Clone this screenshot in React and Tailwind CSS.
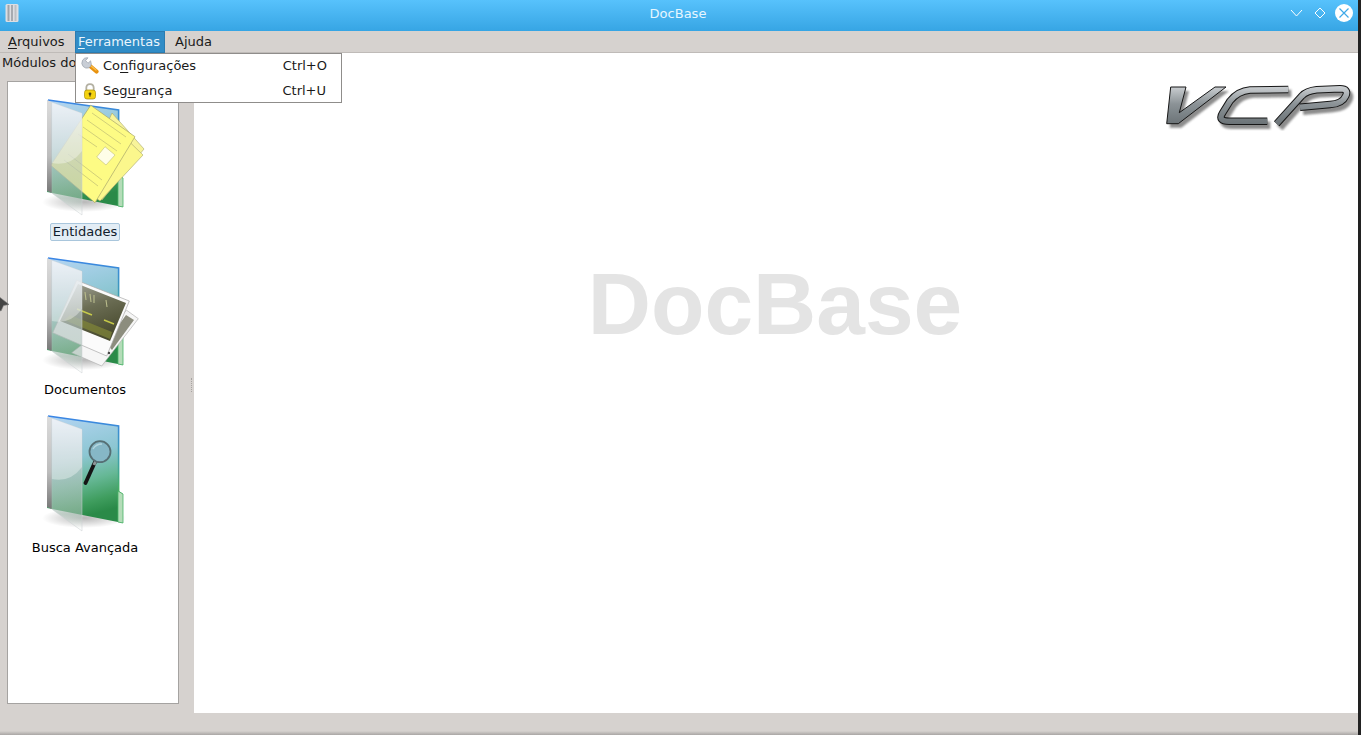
import React from "react";

const modules = [
  { label: "Entidades", kind: "papers", selected: true },
  { label: "Documentos", kind: "photos" },
  { label: "Busca Avançada", kind: "search" },
];

function Papers() {
  return (
    <g>
      <polygon points="72,18 104,54 62,105 40,88" fill="#f8f49a" stroke="#a8a66c" strokeWidth="0.6" />
      <polygon points="68,26 103,60 60,106 30,84" fill="#fbf78c" stroke="#a8a66c" strokeWidth="0.6" />
      <polygon points="50.7,10.3 95,41.7 55,107.7 10.7,70.3" fill="#fdfb84" stroke="#a8a66c" strokeWidth="0.7" />
      <g stroke="#b4b270" strokeWidth="0.6">
        <line x1="52" y1="18" x2="86" y2="42" />
        <line x1="47" y1="25" x2="81" y2="49" />
        <line x1="43" y1="32" x2="77" y2="56" />
        <line x1="38" y1="39" x2="57" y2="52" />
        <line x1="28" y1="59" x2="62" y2="85" />
        <line x1="24" y1="65" x2="58" y2="91" />
      </g>
      <polygon points="65,51.7 75,60 66,70 56.7,62" fill="#fefee8" stroke="#b4b270" strokeWidth="0.5" />
    </g>
  );
}

function Photos() {
  return (
    <g>
      <polygon points="86.7,57.3 98.3,65.7 61.7,113 31.7,99.7" fill="#f6f6f6" stroke="#a9a9a9" strokeWidth="0.6" />
      <polygon points="86,62 94,67 72,97 66,90" fill="#8c8d7e" />
      <polygon points="36.7,27.3 89.3,48 66.7,103 12.7,79.7" fill="#fbfbfb" stroke="#a9a9a9" strokeWidth="0.7" />
      <polygon points="38,31 86,50 70,88 20,68" fill="url(#photo-img)" />
      <polygon points="30,62 72,79 70,86 24,67" fill="#7f8438" opacity="0.75" />
      <path d="M37 56 L52 62 M64 67 L74 71" stroke="#d8dc4a" strokeWidth="1.4" opacity="0.85" />
      <path d="M45 39 L46 47 M50 41 L51 49 M54 42 L54 50 M66 47 L67 54" stroke="#b9bc8c" strokeWidth="1.1" />
      <circle cx="69" cy="100" r="1.2" fill="#444" />
    </g>
  );
}

function Lens() {
  return (
    <g>
      <line x1="55" y1="51" x2="45.5" y2="72" stroke="#151515" strokeWidth="3.8" strokeLinecap="round" />
      <line x1="56" y1="49" x2="54" y2="54" stroke="#8d9798" strokeWidth="3" />
      <circle cx="60" cy="40.7" r="10.5" fill="#86b7c6" stroke="#566f74" strokeWidth="1.8" />
      <path d="M53 38 Q56 33 62 33" stroke="#b4d6df" strokeWidth="1.4" fill="none" />
    </g>
  );
}

function FolderIcon({ kind }) {
  const p = "f-" + kind;
  return (
    <svg width="110" height="128" viewBox="0 0 110 128" className="block shrink-0">
      <defs>
        <linearGradient id={p + "-back"} x1="0" y1="0" x2="0.2" y2="1">
          <stop offset="0" stopColor="#b5d5f4" />
          <stop offset="0.45" stopColor="#8cc6d2" />
          <stop offset="0.68" stopColor="#66b896" />
          <stop offset="0.88" stopColor="#3f9d5e" />
          <stop offset="1" stopColor="#2a8a48" />
        </linearGradient>
        <linearGradient id={p + "-edge"} x1="0" y1="0" x2="0" y2="1">
          <stop offset="0" stopColor="#3a85e6" />
          <stop offset="0.6" stopColor="#3fa2a8" />
          <stop offset="1" stopColor="#46b060" />
        </linearGradient>
        <linearGradient id={p + "-front"} x1="0" y1="0" x2="0" y2="1">
          <stop offset="0" stopColor="#e8ecf4" stopOpacity="0.9" />
          <stop offset="0.5" stopColor="#b8c6c6" stopOpacity="0.68" />
          <stop offset="0.85" stopColor="#a4bcb0" stopOpacity="0.6" />
          <stop offset="1" stopColor="#ffffff" stopOpacity="0.2" />
        </linearGradient>
        <linearGradient id={p + "-strip"} x1="0" y1="0" x2="0" y2="1">
          <stop offset="0" stopColor="#dcdcdc" />
          <stop offset="0.6" stopColor="#bdbdbd" />
          <stop offset="1" stopColor="#777" />
        </linearGradient>
        <radialGradient id={p + "-shadow"}>
          <stop offset="0" stopColor="#000" stopOpacity="0.28" />
          <stop offset="1" stopColor="#000" stopOpacity="0" />
        </radialGradient>
        <linearGradient id="photo-img" x1="0" y1="0" x2="0.4" y2="1">
          <stop offset="0" stopColor="#a6a79c" />
          <stop offset="0.5" stopColor="#6b6d54" />
          <stop offset="1" stopColor="#4a4c30" />
        </linearGradient>
      </defs>
      <ellipse cx="44" cy="107" rx="42" ry="10" fill={`url(#${p}-shadow)`} />
      <polygon points="7,5 79,15 79,80 83,83 83,112 7,97" fill={`url(#${p}-back)`} />
      <polyline points="8,5 78.6,15 78.6,80" fill="none" stroke={`url(#${p}-edge)`} strokeWidth="1.6" />
      <polygon points="78,80 83,83 83,112 78,111" fill="#b4dcb8" stroke="#49b267" strokeWidth="0.8" />
      {kind === "papers" && <Papers />}
      {kind === "photos" && <Photos />}
      {kind === "search" && <Lens />}
      <polygon points="11.7,7.3 42,18.3 42,120 11.7,98" fill={`url(#${p}-front)`} stroke="#c9cfd0" strokeWidth="0.5" />
      <path d="M11.7 7.3 L42 18.3 L42 56 Q30 72 11.7 68 Z" fill="#ffffff" opacity="0.35" />
      <polygon points="7,5 11.7,7.3 11.7,98 7,96" fill={`url(#${p}-strip)`} />
    </svg>
  );
}

function VcpLogo() {
  const v = "5.7,2 21,2 14.3,27.7 50,2 61,2 13.3,38.7 1.7,38.7";
  const c = "M123.3 4.5 L85 5 Q73 6 65 16 L57.7 27.7 Q52 36.5 65 36.2 L102.3 36.2";
  const pp = "M111.7 38.7 L136.7 11 Q141.7 5.8 151.7 4.8 L175 3.8 Q184 3.8 180.7 11 Q177.3 18.8 165 19.5 L135 22.2";
  return (
    <svg width="192" height="46" viewBox="0 0 192 46" className="block">
      <defs>
        <linearGradient id="vcp-metal" gradientUnits="userSpaceOnUse" x1="0" y1="2" x2="0" y2="40">
          <stop offset="0" stopColor="#c9cdd0" />
          <stop offset="0.45" stopColor="#8b9296" />
          <stop offset="1" stopColor="#6a7276" />
        </linearGradient>
        <filter id="vcp-blur" x="-5%" y="-20%" width="110%" height="140%">
          <feGaussianBlur stdDeviation="0.8" />
        </filter>
      </defs>
      <g transform="translate(3 4)" filter="url(#vcp-blur)" opacity="0.8">
        <polygon points={v} fill="#6f6f6f" />
        <path d={c} fill="none" stroke="#6f6f6f" strokeWidth="7.5" />
        <path d={pp} fill="none" stroke="#6f6f6f" strokeWidth="7.5" />
      </g>
      <polygon points={v} fill="url(#vcp-metal)" stroke="#161616" strokeWidth="1" />
      <path d={c} fill="none" stroke="#161616" strokeWidth="7.5" />
      <path d={c} fill="none" stroke="url(#vcp-metal)" strokeWidth="5.5" />
      <path d={pp} fill="none" stroke="#161616" strokeWidth="7.5" />
      <path d={pp} fill="none" stroke="url(#vcp-metal)" strokeWidth="5.5" />
    </svg>
  );
}

function WrenchIcon() {
  return (
    <svg width="18" height="18" viewBox="0 0 18 18" className="block">
      <line x1="9" y1="9" x2="15.5" y2="14.5" stroke="#e8920f" strokeWidth="4.2" strokeLinecap="round" />
      <line x1="10" y1="9" x2="15" y2="13" stroke="#fbbf4a" strokeWidth="1.3" strokeLinecap="round" />
      <path d="M7 0.8 L4.6 3.6 L7 6.2 L9.6 3.8 Q11 7 9.6 9.6 Q7.6 11.6 4.6 11 Q1.4 10 0.8 6.6 Q0.8 2.6 3.6 1.2 Q5 0.6 7 0.8Z" fill="#c9ced6" stroke="#8f95a0" strokeWidth="0.6" />
    </svg>
  );
}

function LockIcon() {
  return (
    <svg width="16" height="17" viewBox="0 0 16 17" className="block">
      <path d="M4.3 8 V5 Q4.3 1.2 8 1.2 Q11.7 1.2 11.7 5 V8" fill="none" stroke="#b3b0a2" strokeWidth="1.8" />
      <rect x="2.5" y="7" width="11" height="9" rx="2.5" fill="#f4d210" stroke="#a88e0a" strokeWidth="0.7" />
      <circle cx="8" cy="10.8" r="1.4" fill="#4f4410" />
      <rect x="7.4" y="11" width="1.2" height="2.6" fill="#4f4410" />
    </svg>
  );
}

function AppIcon() {
  return (
    <svg width="16" height="20" viewBox="0 0 16 20" className="block">
      <rect x="1.5" y="1" width="13" height="18" rx="1.5" fill="#dcdee2" />
      <rect x="3.5" y="2" width="2" height="16" fill="#a0a4aa" />
      <rect x="7" y="2" width="2" height="16" fill="#a6aab0" />
      <rect x="10.5" y="2" width="2" height="16" fill="#bcbfc4" />
    </svg>
  );
}

function TitleBar() {
  return (
    <div className="relative h-[31px] pb-[5px] flex items-center justify-between pl-[4px] pr-[5px] bg-gradient-to-b from-[#57c2fc] to-[#36a5e4]">
      <AppIcon />
      <span className="absolute left-0 right-[2px] top-[5px] text-center text-[13px] leading-[17px] text-[#e6f6ff] pointer-events-none">DocBase</span>
      <div className="flex items-center">
        <svg width="13" height="8" viewBox="0 0 13 8" className="block mr-[11px]">
          <path d="M1 1 L6.5 7 L12 1" fill="none" stroke="#fff" strokeWidth="1" />
        </svg>
        <svg width="12" height="12" viewBox="0 0 12 12" className="block mr-[9px]">
          <path d="M6 1 L11 6 L6 11 L1 6 Z" fill="none" stroke="#fff" strokeWidth="1" />
        </svg>
        <svg width="18" height="18" viewBox="0 0 18 18" className="block">
          <circle cx="9" cy="9" r="9" fill="#fff" />
          <path d="M4.5 4.5 L13.5 13.5 M13.5 4.5 L4.5 13.5" stroke="#3fa9e8" strokeWidth="1.2" />
        </svg>
      </div>
    </div>
  );
}

function MenuBar() {
  return (
    <div className="relative h-[22px] flex items-stretch bg-[#d6d2cf] border-b border-[#bfbbb8] text-[13px] text-[#1a1a1a]">
      <div className="ml-[8px] w-[67px] leading-[21px]">
        <u className="underline-offset-2">A</u>rquivos
      </div>
      <div className="w-[90px] h-[22px] pl-[2px] leading-[20px] bg-[#308cc6] border border-[#2a7bb0] text-[#eaf5fc]">
        <u className="underline-offset-2">F</u>erramentas
      </div>
      <div className="ml-[10px] leading-[21px]">Ajuda</div>

      <div className="absolute left-[75px] top-[22px] z-10 w-[267px] h-[50px] flex flex-col bg-white border border-[#8f8d8b]">
        <div className="h-[23px] shrink-0 flex items-center pl-[5px] pr-[14px]">
          <span className="w-[22px] shrink-0"><WrenchIcon /></span>
          <span className="flex-1">
            Co<u className="underline-offset-2">n</u>figurações
          </span>
          <span>Ctrl+O</span>
        </div>
        <div className="h-[25px] shrink-0 pt-[3px] flex items-center pl-[6px] pr-[15px]">
          <span className="w-[21px] shrink-0"><LockIcon /></span>
          <span className="flex-1">
            Seg<u className="underline-offset-2">u</u>rança
          </span>
          <span>Ctrl+U</span>
        </div>
      </div>
    </div>
  );
}

function ModuleItem({ label, kind, selected }) {
  return (
    <div className="w-[154px] h-[158px] pt-[12px] flex flex-col items-center shrink-0">
      <div className="w-[110px] ml-[20px]">
        <FolderIcon kind={kind} />
      </div>
      <div
        className={
          "h-[18px] px-[2px] flex items-center text-[13px] rounded-[2px] border " +
          (selected ? "bg-[#e3edf5] border-[#a9c6dc] text-[#10202c]" : "border-transparent text-black")
        }
      >
        {label}
      </div>
    </div>
  );
}

export default function App() {
  return (
    <div
      className="relative h-[735px] w-full flex overflow-hidden bg-[#222222]"
      style={{ fontFamily: '"DejaVu Sans", sans-serif' }}
    >
      <div className="w-[1358px] h-full flex flex-col bg-[#d6d2cf]">
        <TitleBar />
        <MenuBar />
        <div className="h-[660px] flex">
          <div className="w-[179px] pl-[7px] flex flex-col">
            <div className="h-[28px] -ml-[5px] pt-[1px] text-[13px] leading-[17px] text-[#1a1a1a]">Módulos do</div>
            <div className="h-[623px] bg-white border border-[#a5a3a1] pt-[1px] flex flex-col overflow-hidden">
              {modules.map((m) => (
                <ModuleItem key={m.label} {...m} />
              ))}
            </div>
          </div>
          <div className="w-[15px] flex items-center justify-center">
            <div className="mt-[4px] ml-[10px] w-[2px] h-[14px] border-l border-dotted border-[#a8a4a1]" />
          </div>
          <div className="flex-1 bg-white flex flex-col">
            <div className="self-end mt-[32px] mr-[1px]">
              <VcpLogo />
            </div>
            <h1
              className="self-center mt-[123px] -ml-[2px] text-[87.5px] leading-[100px] font-bold text-[#e4e4e4]"
              style={{ fontFamily: '"Liberation Sans", sans-serif' }}
            >
              DocBase
            </h1>
          </div>
        </div>
        <div className="flex-1 flex flex-col justify-end">
          <div className="h-[4px] bg-gradient-to-b from-[#d6d2cf] to-[#a9a6a4]" />
        </div>
      </div>

      {/* mouse pointer cut off by the screen edge */}
      <svg width="10" height="18" viewBox="0 0 10 18" className="absolute left-0 top-[295px]">
        <path d="M-3 0 L9 9.5 L3.5 10.5 L1 16 L-3 14 Z" fill="#444" stroke="#777" strokeWidth="0.6" />
      </svg>
    </div>
  );
}
